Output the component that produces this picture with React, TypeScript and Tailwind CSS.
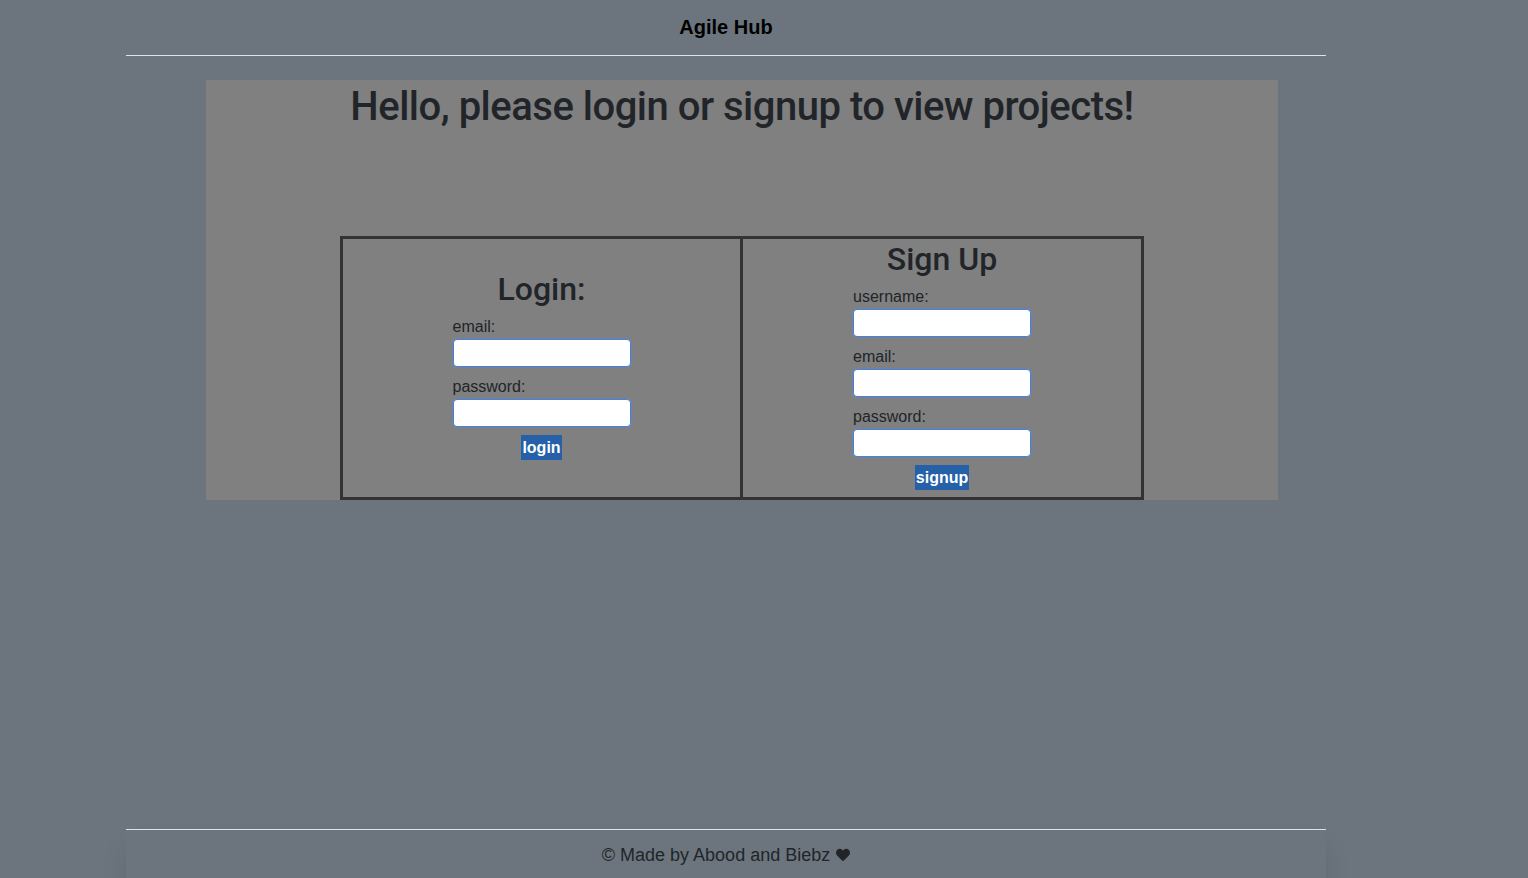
import { FaHeart } from "react-icons/fa";

export default function App() {
	return (
		<div className="min-h-screen bg-[#6c757d] flex flex-col text-[#212529] font-['Liberation_Sans',sans-serif]">
			<header className="w-[1200px] ml-[126px] h-[56px] border-b border-[#dee2e6] flex items-center justify-center">
				<div className="text-[20px] font-bold text-black leading-7 -mt-[1px]">Agile Hub</div>
			</header>
			<div className="w-[1200px] ml-[126px] mt-[24px]">
				<div className="ml-[80px] w-[1072px] bg-[#808080] flex flex-col items-center">
					<h1 className="pt-[3px] text-[40px] leading-[48px] font-medium tracking-[-0.5px] font-['Roboto',sans-serif]">Hello, please login or signup to view projects!</h1>
					<div className="mt-[105px] flex">
						<div className="w-[403px] border-[3px] border-[#333] flex flex-col items-center justify-center pb-[6px]">
							<h2 className="text-[32px] leading-[38px] font-medium font-['Roboto',sans-serif]">Login:</h2>
							<form className="mt-[7px] flex flex-col">
								<label className="text-[16px] leading-6">email:</label>
								<input type="email" className="w-[178px] h-[28px] bg-white border border-[#3b82f6] rounded-[4px] outline-none" />
								<label className="mt-[8px] text-[16px] leading-6">password:</label>
								<input type="password" className="w-[178px] h-[28px] bg-white border border-[#3b82f6] rounded-[4px] outline-none" />
								<button type="button" className="mt-[8px] self-center h-[25px] px-[1px] bg-[#2560a8] text-white font-bold text-[16px] leading-[25px]">login</button>
							</form>
						</div>
						<div className="w-[404px] -ml-[3px] border-[3px] border-[#333] flex flex-col items-center pt-[1px] pb-[7px]">
							<h2 className="text-[32px] leading-[38px] font-medium font-['Roboto',sans-serif]">Sign Up</h2>
							<form className="mt-[7px] flex flex-col">
								<label className="text-[16px] leading-6">username:</label>
								<input type="text" className="w-[178px] h-[28px] bg-white border border-[#3b82f6] rounded-[4px] outline-none" />
								<label className="mt-[8px] text-[16px] leading-6">email:</label>
								<input type="email" className="w-[178px] h-[28px] bg-white border border-[#3b82f6] rounded-[4px] outline-none" />
								<label className="mt-[8px] text-[16px] leading-6">password:</label>
								<input type="password" className="w-[178px] h-[28px] bg-white border border-[#3b82f6] rounded-[4px] outline-none" />
								<button type="button" className="mt-[8px] self-center h-[25px] px-[1px] bg-[#2560a8] text-white font-bold text-[16px] leading-[25px]">signup</button>
							</form>
						</div>
					</div>
				</div>
			</div>
			<footer className="mt-auto w-[1200px] ml-[126px] border-t border-[#dee2e6] pt-[12px] pb-[10px] flex items-center justify-center gap-[6px] text-[18px] leading-[26px] shadow-[0_18px_30px_-8px_rgba(0,0,0,0.25)]">
				<span>© Made by Abood and Biebz</span>
				<FaHeart className="w-[14px] h-[14px]" />
			</footer>
		</div>
	);
}
